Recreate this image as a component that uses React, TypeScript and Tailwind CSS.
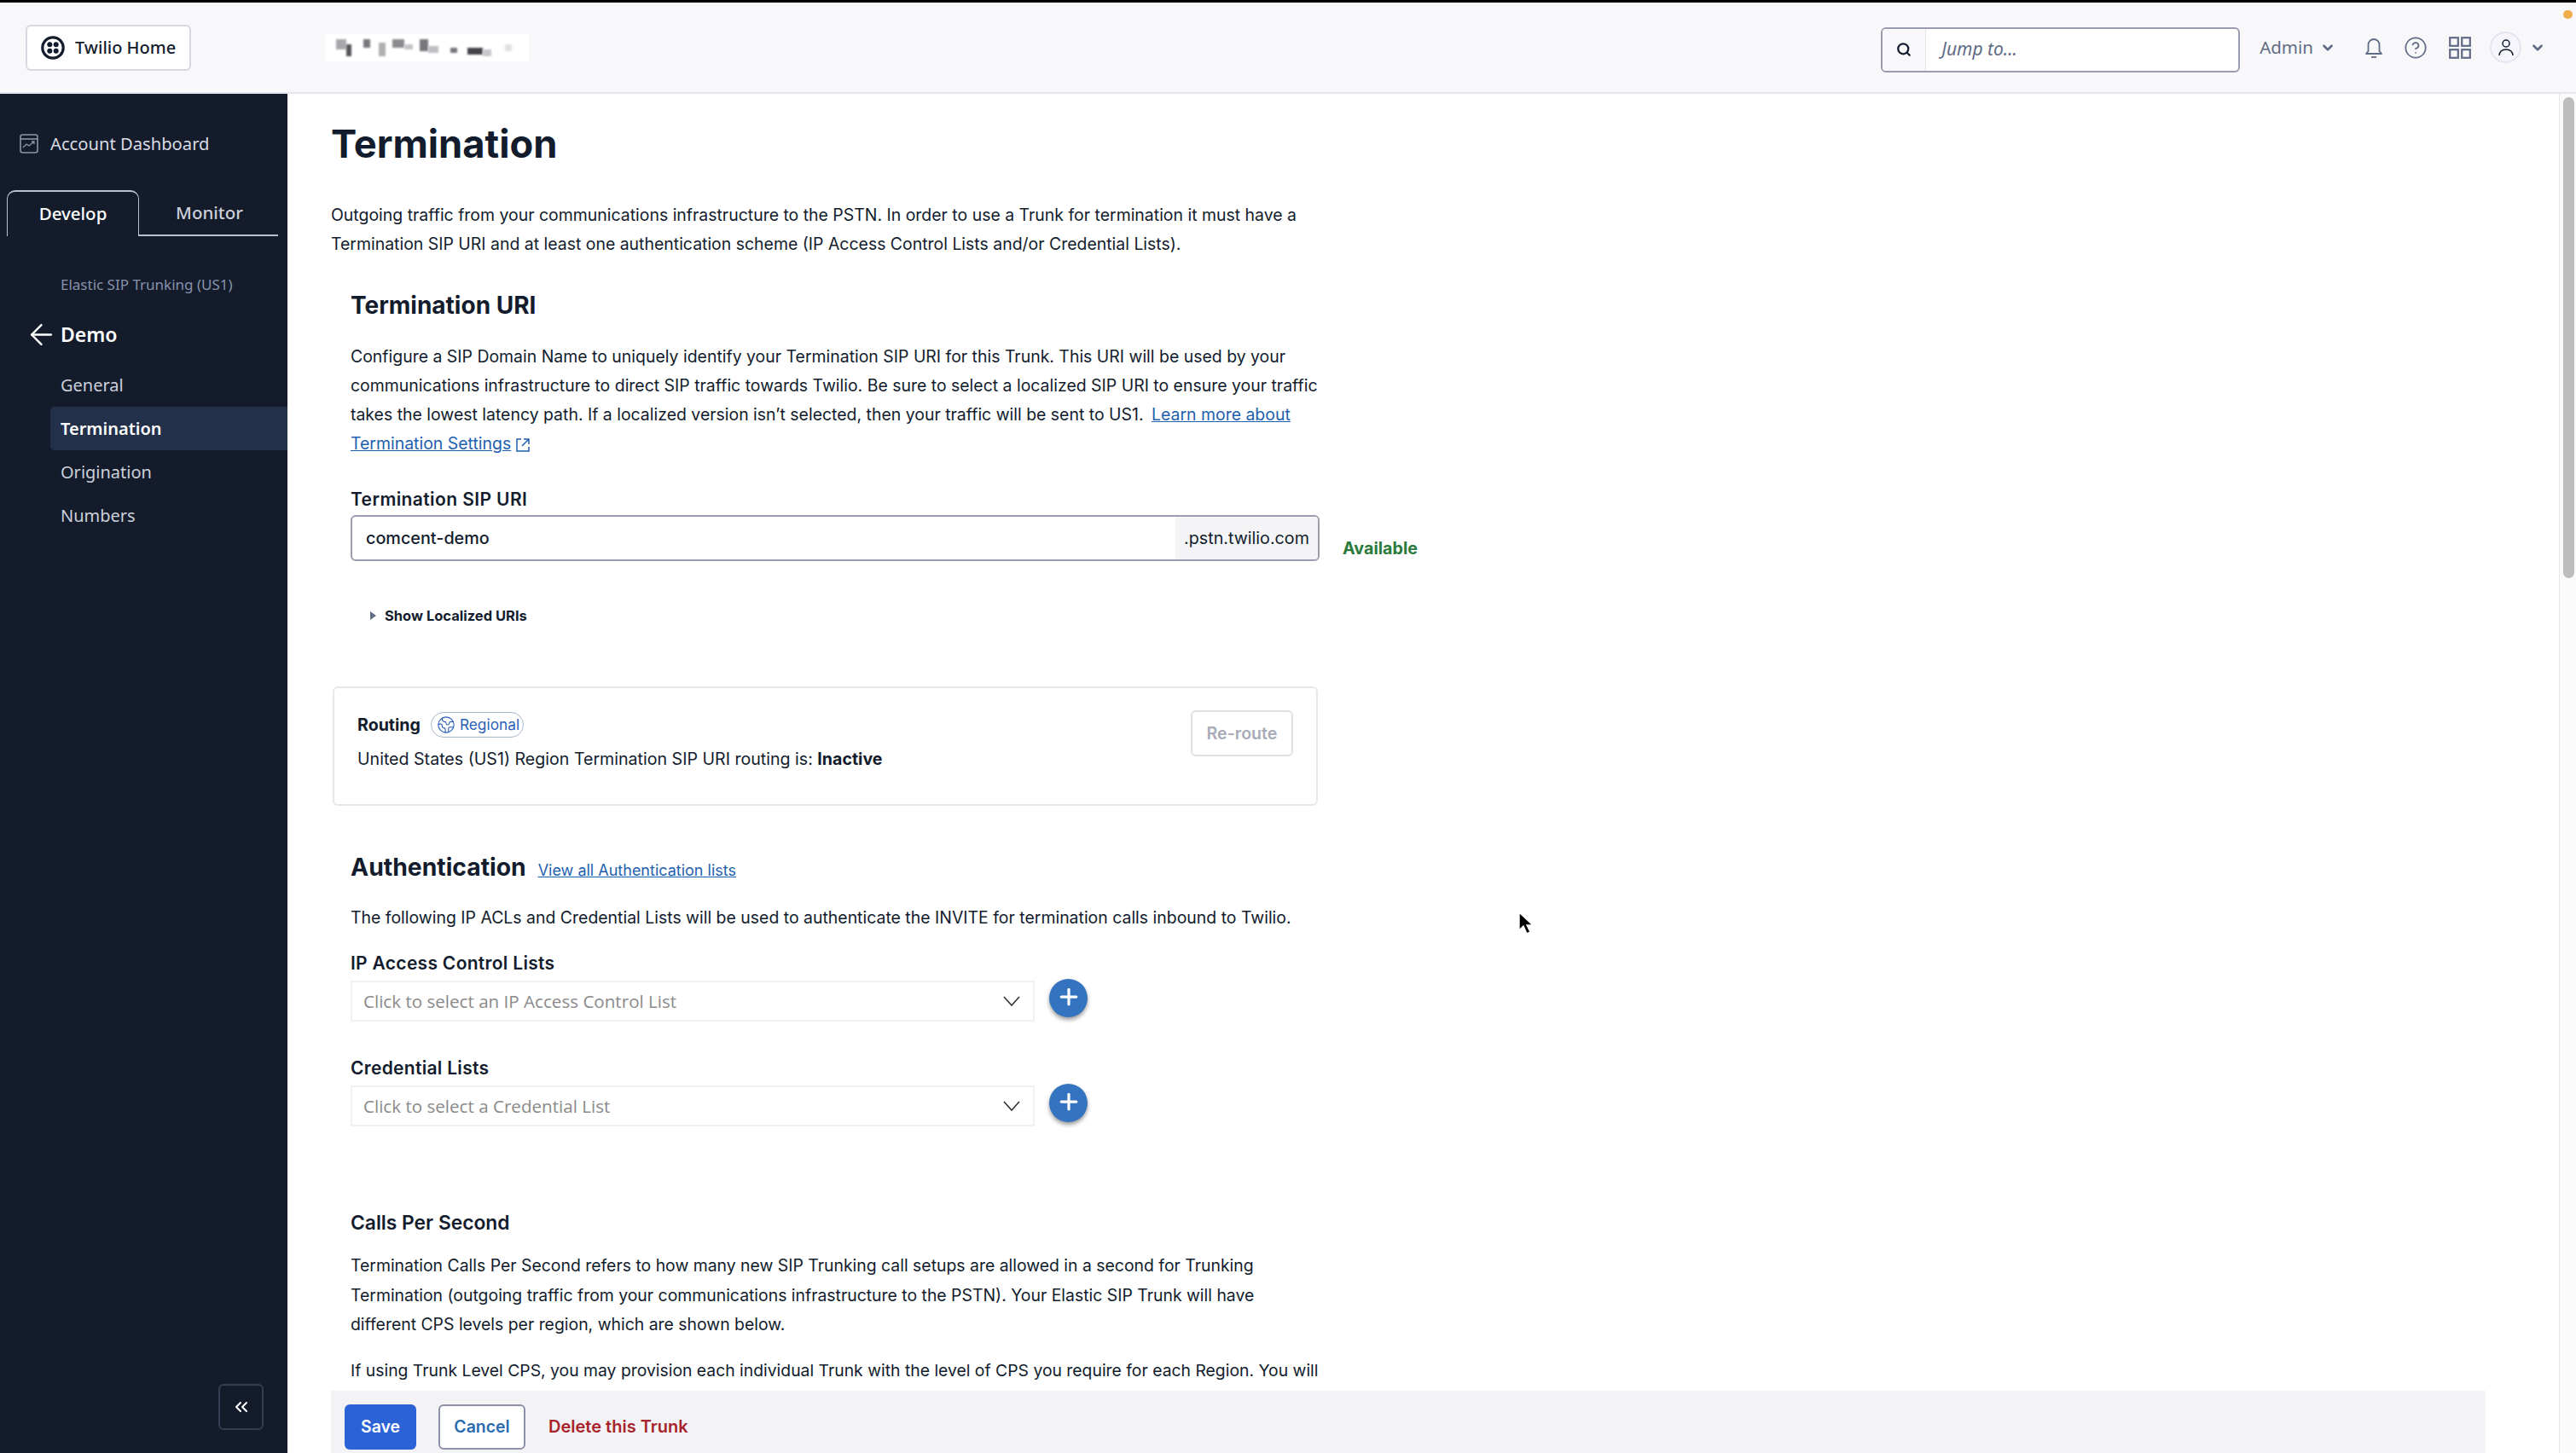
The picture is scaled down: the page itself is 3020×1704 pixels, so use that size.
import { ArrowLeft, ChevronDown, ChevronsLeft, CircleHelp, Earth, Plus, Search } from "lucide-react";

const navFont = "[font-family:'Noto_Sans',sans-serif]";

function TwilioLogo() {
  return (
    <svg width="28" height="28" viewBox="0 0 28 28" fill="none">
      <circle cx="14" cy="14" r="12.2" stroke="#121c2d" strokeWidth="3.2" />
      <circle cx="10.300" cy="10.300" r="3" fill="#121c2d" />
      <circle cx="17.700" cy="10.300" r="3" fill="#121c2d" />
      <circle cx="10.300" cy="17.700" r="3" fill="#121c2d" />
      <circle cx="17.700" cy="17.700" r="3" fill="#121c2d" />
    </svg>
  );
}

function BlurredLogo() {
  const blocks: [number, number, number, number, string][] = [
    [12, 10, 12, 12, "#a8a8ac"], [24, 16, 6, 14, "#55555a"], [44, 10, 8, 10, "#77777c"], [62, 14, 8, 16, "#b0b0b4"],
    [78, 10, 14, 10, "#8c8c90"], [92, 16, 10, 6, "#c4c4c8"], [110, 10, 10, 14, "#77777c"], [120, 18, 12, 8, "#bdbdc2"],
    [146, 20, 8, 6, "#77777c"], [166, 20, 18, 8, "#44444a"], [184, 22, 10, 8, "#c8c8cc"], [210, 16, 8, 8, "#e0e0e4"],
  ];
  return (
    <div className="relative ml-[158px] h-[32px] w-[238px] bg-white">
      {blocks.map((b, i) => (
        <span key={i} className="absolute blur-[1px]" style={{ left: b[0], top: b[1] - 4, width: b[2], height: b[3], background: b[4] }} />
      ))}
    </div>
  );
}

function Header() {
  return (
    <header className={`flex h-[107px] shrink-0 items-center border-b-2 border-[#e6e7ee] bg-[#f8f8fb] pl-[30px] pr-[36px] ${navFont}`}>
      <div className="flex h-[54px] w-[194px] items-center gap-[12px] rounded-[6px] border-2 border-[#d8d9e0] bg-white pl-[16px] text-[20px] font-medium text-[#121c2d]">
        <TwilioLogo />
        <span>Twilio Home</span>
      </div>
      <BlurredLogo />
      <div className="ml-auto flex items-center">
        <div className="mt-[5px] flex h-[53px] w-[421px] overflow-hidden rounded-[6px] border-2 border-[#9a9db0] bg-white">
          <div className="flex w-[51px] items-center justify-center border-r border-[#e6e7ee] bg-[#f8f8fb]">
            <Search size={18} strokeWidth={3} className="text-[#121c2d]" />
          </div>
          <span className="flex items-center pl-[18px] text-[21px] italic text-[#606b85]">Jump to...</span>
        </div>
        <span className="ml-[23px] text-[20.500px] text-[#606b85]">Admin</span>
        <ChevronDown size={18} strokeWidth={3.5} className="ml-[8px] text-[#606b85]" />
        <svg className="ml-[34px]" width="22" height="26" viewBox="0 0 22 26" fill="none" stroke="#606b85" strokeWidth="1.8">
          <path d="M2 20h18l-2.500-3V9.500a6.500 6.500 0 0 0-13 0V17L2 20Z" strokeLinejoin="round" />
          <path d="M8 24h6" />
        </svg>
        <CircleHelp size={28} strokeWidth={1.5} className="ml-[24px] text-[#606b85]" />
        <svg className="ml-[25px]" width="26" height="26" viewBox="0 0 26 26" fill="none" stroke="#606b85" strokeWidth="2.2">
          <rect x="1.200" y="1.200" width="9.600" height="9.600" />
          <rect x="15.200" y="1.200" width="9.600" height="9.600" />
          <rect x="1.200" y="15.200" width="9.600" height="9.600" />
          <rect x="15.200" y="15.200" width="9.600" height="9.600" />
        </svg>
        <div className="ml-[22px] flex h-[37px] w-[37px] items-center justify-center rounded-full border-2 border-[#e6e4f0] bg-[#f6f5fb]">
          <svg width="20" height="22" viewBox="0 0 20 22" fill="none" stroke="#121c2d" strokeWidth="1.5">
            <circle cx="10" cy="6" r="4" />
            <path d="M2 20c.5-5 3.500-7 8-7s7.500 2 8 7" />
          </svg>
        </div>
        <ChevronDown size={18} strokeWidth={3.5} className="ml-[10px] text-[#606b85]" />
      </div>
    </header>
  );
}

function Sidebar() {
  const rowBase = "flex h-[51px] items-center pl-[12px]";
  return (
    <aside className={`flex w-[337px] shrink-0 flex-col bg-[#141c2c] ${navFont}`}>
      <div className="mt-[46px] flex h-[24px] items-center pl-[23px] text-[20.200px] text-[#d8dbe3]">
        <svg width="22" height="23" viewBox="0 0 22 23" fill="none" stroke="#8d94a5" strokeWidth="1.6">
          <rect x="1" y="1" width="20" height="21" rx="2.500" />
          <path d="M1 6h20" />
          <path d="M4 16l4-4 3 2 6-5M14 9h3v3" strokeWidth="1.3" />
        </svg>
        <span className="ml-[14px]">Account Dashboard</span>
      </div>
      <div className="mt-[43px] flex h-[54px] pl-[8px] pr-[11px]">
        <div className="flex w-[155px] items-center justify-center rounded-t-[10px] border-x border-t-2 border-[#b8bfcd] pb-[1px] text-[20.500px] font-medium text-white">Develop</div>
        <div className="flex flex-1 items-center justify-center border-b-2 border-[#b8bfcd] pl-[2px] text-[20.500px] font-medium text-[#ccd0da]">Monitor</div>
      </div>
      <div className="mt-[45px] pl-[71px] text-[17px] leading-[24px] text-[#8891aa]">Elastic SIP Trunking (US1)</div>
      <div className="mt-[28px] flex h-[36px] items-center pl-[29px] text-[23px] font-semibold text-white">
        <ArrowLeft size={39} strokeWidth={1.5} className="text-white" />
        <span className="ml-[3px]">Demo</span>
      </div>
      <nav className="mt-[16px] flex flex-col pl-[59px] text-[20px] text-[#ccd0da]">
        <div className={rowBase}>General</div>
        <div className={`${rowBase} rounded-l-[5px] bg-[#22304a] font-semibold text-white`}>Termination</div>
        <div className={rowBase}>Origination</div>
        <div className={rowBase}>Numbers</div>
      </nav>
      <div className="mt-auto mb-[27px] ml-[256px] flex h-[54px] w-[53px] items-center justify-center rounded-[6px] border-2 border-[#333e52]">
        <ChevronsLeft size={24} strokeWidth={2} className="text-white" />
      </div>
    </aside>
  );
}

function SelectRow({ placeholder }: { placeholder: string }) {
  return (
    <div className="mt-[6px] flex items-start">
      <div className="flex h-[48px] w-[802px] items-center justify-between border-2 border-[#f0f0f0] pl-[13px] pr-[15px] [font-family:'Open_Sans',sans-serif] text-[20.600px] text-[#8a8a8a]">
        <span>{placeholder}</span>
        <svg width="20" height="12" viewBox="0 0 20 12" fill="none" stroke="#333" strokeWidth="1.6"><path d="M1 1l9 10 9-10" /></svg>
      </div>
      <div className="ml-[17px] -mt-[2px] flex h-[45px] w-[45px] items-center justify-center rounded-full bg-[#3373bf] pb-[4px] shadow-[0_3px_5px_rgba(0,0,0,0.4)]">
        <Plus size={30} strokeWidth={2.6} className="text-white" />
      </div>
    </div>
  );
}

function Main() {
  return (
    <main className="relative flex-1 overflow-hidden bg-white [font-family:Inter,sans-serif] text-[19.450px] leading-[34.300px] text-[#121c2d]">
      <div className="pl-[51px]">
        <h1 className="mt-[29px] text-[45.300px] font-bold leading-[60px]">Termination</h1>
        <p className="mt-[36px] whitespace-nowrap">
          Outgoing traffic from your communications infrastructure to the PSTN. In order to use a Trunk for termination it must have a<br />
          Termination SIP URI and at least one authentication scheme (IP Access Control Lists and/or Credential Lists).
        </p>
        <section className="pl-[23px]">
          <h2 className="mt-[36px] text-[28px] font-bold leading-[36px]">Termination URI</h2>
          <p className="mt-[25px] whitespace-nowrap">
            Configure a SIP Domain Name to uniquely identify your Termination SIP URI for this Trunk. This URI will be used by your<br />
            communications infrastructure to direct SIP traffic towards Twilio. Be sure to select a localized SIP URI to ensure your traffic<br />
            takes the lowest latency path. If a localized version isn’t selected, then your traffic will be sent to US1.{" "}
            <a className="ml-[4px] text-[#1e5fae] underline">Learn more about</a><br />
            <a className="text-[#1e5fae] underline">Termination Settings</a>
            <svg className="ml-[5px] inline-block" width="18" height="18" viewBox="0 0 18 18" fill="none" stroke="#1e5fae" strokeWidth="1.5">
              <path d="M7 2H2v14h14v-5M10 2h6v6M16 2L8 10" />
            </svg>
          </p>
          <div className="mt-[34px] text-[21px] font-semibold leading-[28px] tracking-[0.4px]">Termination SIP URI</div>
          <div className="mt-[4px] flex items-start">
            <div className="flex h-[54px] w-[1136px] overflow-hidden rounded-[6px] border-2 border-[#9a9db0]">
              <span className="flex flex-1 items-center pl-[16px] text-[19.800px] font-medium">comcent-demo</span>
              <span className="flex w-[167px] items-center justify-center bg-[#f4f4f6] text-[19.700px]">.pstn.twilio.com</span>
            </div>
            <span className="ml-[27px] mt-[22px] text-[19.700px] font-bold leading-[34px] text-[#2a7a3b]">Available</span>
          </div>
          <div className="ml-[23px] mt-[50px] flex h-[24px] items-center text-[16.500px] font-bold">
            <svg width="7" height="10" viewBox="0 0 7 10"><path d="M0 0l7 5-7 5z" fill="#606b85" /></svg>
            <span className="ml-[10px]">Show Localized URIs</span>
          </div>
        </section>
        <div className="ml-[2px] mt-[71px] flex h-[140px] w-[1155px] items-start justify-between rounded-[6px] border-2 border-[#e8e8ec] pl-[27px] pr-[27px] text-[19.600px]">
          <div>
            <div className="mt-[28px] flex h-[30px] items-center">
              <span className="font-bold">Routing</span>
              <span className="ml-[12px] flex h-[30px] w-[109px] items-center rounded-full border border-[#a9b6cf] pl-[6px] text-[17.300px] text-[#2a5fb8]">
                <Earth size={22} strokeWidth={1.2} />
                <span className="ml-[5px]">Regional</span>
              </span>
            </div>
            <p className="mt-[8px] whitespace-nowrap">
              United States (US1) Region Termination SIP URI routing is: <strong className="font-bold">Inactive</strong>
            </p>
          </div>
          <div className="mt-[26px] flex h-[54px] w-[120px] items-center justify-center rounded-[6px] border-2 border-[#e0e1e6] font-semibold text-[#a8acb8]">Re-route</div>
        </div>
        <section className="pl-[23px]">
          <div className="mt-[52px] flex items-baseline gap-[14px]">
            <h2 className="text-[28.300px] font-bold leading-[40px]">Authentication</h2>
            <a className="text-[18px] text-[#1e5fae] underline">View all Authentication lists</a>
          </div>
          <p className="mt-[21px] whitespace-nowrap">The following IP ACLs and Credential Lists will be used to authenticate the INVITE for termination calls inbound to Twilio.</p>
          <div className="mt-[23px] text-[21px] font-semibold leading-[28px] tracking-[0.3px]">IP Access Control Lists</div>
          <SelectRow placeholder="Click to select an IP Access Control List" />
          <div className="mt-[41px] text-[21px] font-semibold leading-[28px] tracking-[0.3px]">Credential Lists</div>
          <SelectRow placeholder="Click to select a Credential List" />
          <h3 className="mt-[95px] text-[22.800px] font-semibold leading-[36px]">Calls Per Second</h3>
          <p className="mt-[15px] whitespace-nowrap text-[19.400px]">
            Termination Calls Per Second refers to how many new SIP Trunking call setups are allowed in a second for Trunking<br />
            Termination (outgoing traffic from your communications infrastructure to the PSTN). Your Elastic SIP Trunk will have<br />
            different CPS levels per region, which are shown below.
          </p>
          <p className="mt-[20px] whitespace-nowrap text-[19.350px]">If using Trunk Level CPS, you may provision each individual Trunk with the level of CPS you require for each Region. You will</p>
        </section>
      </div>

      <div className="absolute bottom-0 left-[51px] flex h-[73px] w-[2526px] items-start gap-[26px] bg-[#f3f3f6] pl-[16px] pt-[16px] font-semibold">
        <button className="h-[53px] w-[84px] rounded-[6px] bg-[#2b62d6] text-white">Save</button>
        <button className="h-[53px] w-[102px] rounded-[6px] border-2 border-[#8c90a8] bg-white text-[#2b6cb0]">Cancel</button>
        <a className="ml-[1px] flex h-[53px] items-center text-[20px] text-[#a8242b]">Delete this Trunk</a>
      </div>

      <div className="absolute inset-y-0 right-0 w-[20px] border-l border-[#e8e8ec] bg-[#fafafa]">
        <div className="ml-[4px] mt-[4px] h-[564px] w-[13px] rounded-full bg-[#bdbdbd]" />
      </div>

      <svg className="absolute left-[1443px] top-[959px]" width="18" height="28" viewBox="0 0 18 28">
        <path d="M1 1v21l5-5 4 9 4-2-4-8h7z" fill="#000" stroke="#fff" strokeWidth="1.4" />
      </svg>
    </main>
  );
}

export default function App() {
  return (
    <div className="relative flex h-[1704px] w-[3020px] flex-col overflow-hidden border-t-[3px] border-black bg-white">
      <Header />
      <div className="flex min-h-0 flex-1">
        <Sidebar />
        <Main />
      </div>
      <span className="absolute right-[4px] top-[9px] h-[10px] w-[11px] rounded-full bg-[#f0ad4e]" />
    </div>
  );
}
